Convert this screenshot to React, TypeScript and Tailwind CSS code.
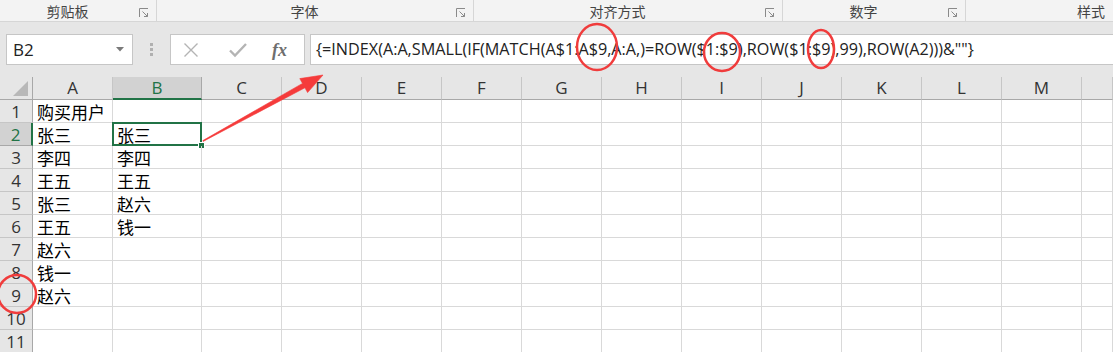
import React from 'react'

const cols = ['A', 'B', 'C', 'D', 'E', 'F', 'G', 'H', 'I', 'J', 'K', 'L', 'M', '']

const colA = ['购买用户', '张三', '李四', '王五', '张三', '王五', '赵六', '钱一', '赵六', '', '']
const colB = ['', '张三', '李四', '王五', '赵六', '钱一', '', '', '', '', '']

const groups = [
  { label: '剪贴板', w: 'w-[157px]', launcher: true },
  { label: '字体', w: 'w-[317px]', launcher: true },
  { label: '对齐方式', w: 'w-[309px]', launcher: true },
  { label: '数字', w: 'w-[183px]', launcher: true },
]

function Launcher() {
  return (
    <svg width="10" height="10" viewBox="0 0 10 10" className="mr-[7px] mt-[4px] shrink-0">
      <path d="M0.5 9V0.5H9" fill="none" stroke="#8a8a8a" strokeWidth="1" />
      <path d="M3.5 3.5L8.5 8.5M8.5 5V8.5H5" fill="none" stroke="#8a8a8a" strokeWidth="1" />
    </svg>
  )
}

export default function App() {
  return (
    <div className="relative w-[1113px] h-[352px] overflow-hidden bg-white font-['Noto_Sans_CJK_SC',sans-serif]">
      {/* ribbon group labels */}
      <div className="flex h-[22px] bg-[#f3f3f3] border-b border-[#d6d6d6] text-[14px] text-[#444]">
        {groups.map((g) => (
          <div key={g.label} className={`${g.w} flex items-center border-r border-[#d6d6d6]`}>
            <div className="flex-1 text-center pr-[4px] leading-[20px]">{g.label}</div>
            {g.launcher && <Launcher />}
          </div>
        ))}
        <div className="flex-1 flex items-center justify-end pr-[8px] leading-[20px]">样式</div>
      </div>

      {/* formula bar */}
      <div className="flex items-start h-[55px] bg-[#e6e6e6] pt-[12px] pl-[6px]">
        <div className="flex items-center justify-between w-[127px] h-[31px] bg-white border border-[#c6c6c6] pl-[6px] pr-[8px]">
          <span className="text-[17px] text-[#222] font-['Open_Sans',sans-serif]">B2</span>
          <svg width="8" height="5" viewBox="0 0 8 5">
            <path d="M0 0H8L4 4.5Z" fill="#7a7a7a" />
          </svg>
        </div>
        <div className="flex flex-col gap-[2px] ml-[17px] mt-[9px]">
          <div className="w-[3px] h-[3px] bg-[#b0b0b0]" />
          <div className="w-[3px] h-[3px] bg-[#b0b0b0]" />
          <div className="w-[3px] h-[3px] bg-[#b0b0b0]" />
        </div>
        <div className="flex items-center w-[135px] h-[31px] ml-[17px] bg-white border border-[#c6c6c6]">
          <svg width="16" height="16" viewBox="0 0 16 16" className="ml-[12px]">
            <path d="M1.5 1.5L14.5 14.5M14.5 1.5L1.5 14.5" stroke="#b4b4b4" strokeWidth="1.4" fill="none" />
          </svg>
          <svg width="18" height="16" viewBox="0 0 18 16" className="ml-[30px]">
            <path d="M1 8.5L6 13.5L17 2" stroke="#b4b4b4" strokeWidth="2.4" fill="none" />
          </svg>
          <span className="ml-[25px] text-[18px] italic font-bold text-[#6e6e6e] font-['Liberation_Serif',serif] leading-none">
            fx
          </span>
        </div>
        <div className="flex items-center flex-1 h-[31px] ml-[5px] bg-white border border-[#c6c6c6] border-r-0 pl-[5px]">
          <span className="text-[16.2px] text-[#222] font-['Open_Sans',sans-serif] whitespace-nowrap">
            {'{=INDEX(A:A,SMALL(IF(MATCH(A$1:A$9,A:A,)=ROW($1:$9),ROW($1:$9),99),ROW(A2)))&""}'}
          </span>
        </div>
      </div>

      {/* sheet grid */}
      <div className="grid grid-cols-[33px_80px_89px_repeat(11,80px)_1fr] grid-rows-[23px_repeat(11,23px)] font-['Open_Sans',sans-serif]">
        <div className="relative bg-[#e6e6e6] border-r border-b border-[#a8a8a8]">
          <svg width="16" height="15" viewBox="0 0 16 15" className="absolute right-[3px] bottom-[3px]">
            <path d="M15 0V15H0Z" fill="#b8b8b8" />
          </svg>
        </div>
        {cols.map((c, i) => (
          <div
            key={`h${i}`}
            className={
              c === 'B'
                ? 'flex items-center justify-center bg-[#d2d2d2] border-r border-[#a8a8a8] border-b-2 border-b-[#217346] text-[17px] text-[#217346]'
                : 'flex items-center justify-center bg-[#e6e6e6] border-r border-[#c6c6c6] border-b border-b-[#a8a8a8] text-[17px] text-[#333]'
            }
          >
            {c}
          </div>
        ))}
        {colA.map((a, r) => (
          <React.Fragment key={`r${r}`}>
            <div
              className={
                r === 1
                  ? 'flex items-center justify-center bg-[#d2d2d2] border-r-2 border-r-[#217346] border-b border-[#a8a8a8] text-[17px] text-[#217346] pt-[2px]'
                  : 'flex items-center justify-center bg-[#e6e6e6] border-r border-b border-[#c6c6c6] border-r-[#a8a8a8] text-[17px] text-[#333] pt-[2px]'
              }
            >
              {r + 1}
            </div>
            <div className="border-r border-b border-[#d9d9d9] pl-[4px] pt-[1px] text-[17px] leading-[22px] text-black font-['Noto_Sans_CJK_SC',sans-serif] whitespace-nowrap">
              {a}
            </div>
            <div className="relative border-r border-b border-[#d9d9d9] pl-[4px] pt-[1px] text-[17px] leading-[22px] text-black font-['Noto_Sans_CJK_SC',sans-serif]">
              {colB[r]}
              {r === 1 && (
                <>
                  <div className="absolute -left-[1px] -top-[1px] -right-[1px] -bottom-[1px] border-2 border-[#217346]" />
                  <div className="absolute -right-[4px] -bottom-[4px] w-[7px] h-[7px] bg-[#217346] border border-white" />
                </>
              )}
            </div>
            {cols.slice(2).map((c, i) => (
              <div key={`c${r}-${i}`} className="border-r border-b border-[#d9d9d9]" />
            ))}
          </React.Fragment>
        ))}
      </div>

      {/* red annotations */}
      <svg width="1113" height="352" className="absolute inset-0 pointer-events-none">
        <polygon
          points="202.8,140.6 302.5,83.4 299.8,78.6 323,75 307.6,92.6 304.9,87.8 203.2,141.4"
          fill="#f53b3b"
          stroke="#f53b3b"
          strokeWidth="0.6"
          strokeLinejoin="round"
        />
        <ellipse cx="597" cy="47" rx="20" ry="23" fill="none" stroke="#f03c3c" strokeWidth="2.5" />
        <ellipse cx="722" cy="52" rx="18" ry="19" fill="none" stroke="#f03c3c" strokeWidth="2.5" />
        <ellipse cx="821" cy="49" rx="13" ry="19" fill="none" stroke="#f03c3c" strokeWidth="2.5" />
        <ellipse cx="17" cy="294" rx="19" ry="19" fill="none" stroke="#f03c3c" strokeWidth="2.5" />
      </svg>
    </div>
  )
}
